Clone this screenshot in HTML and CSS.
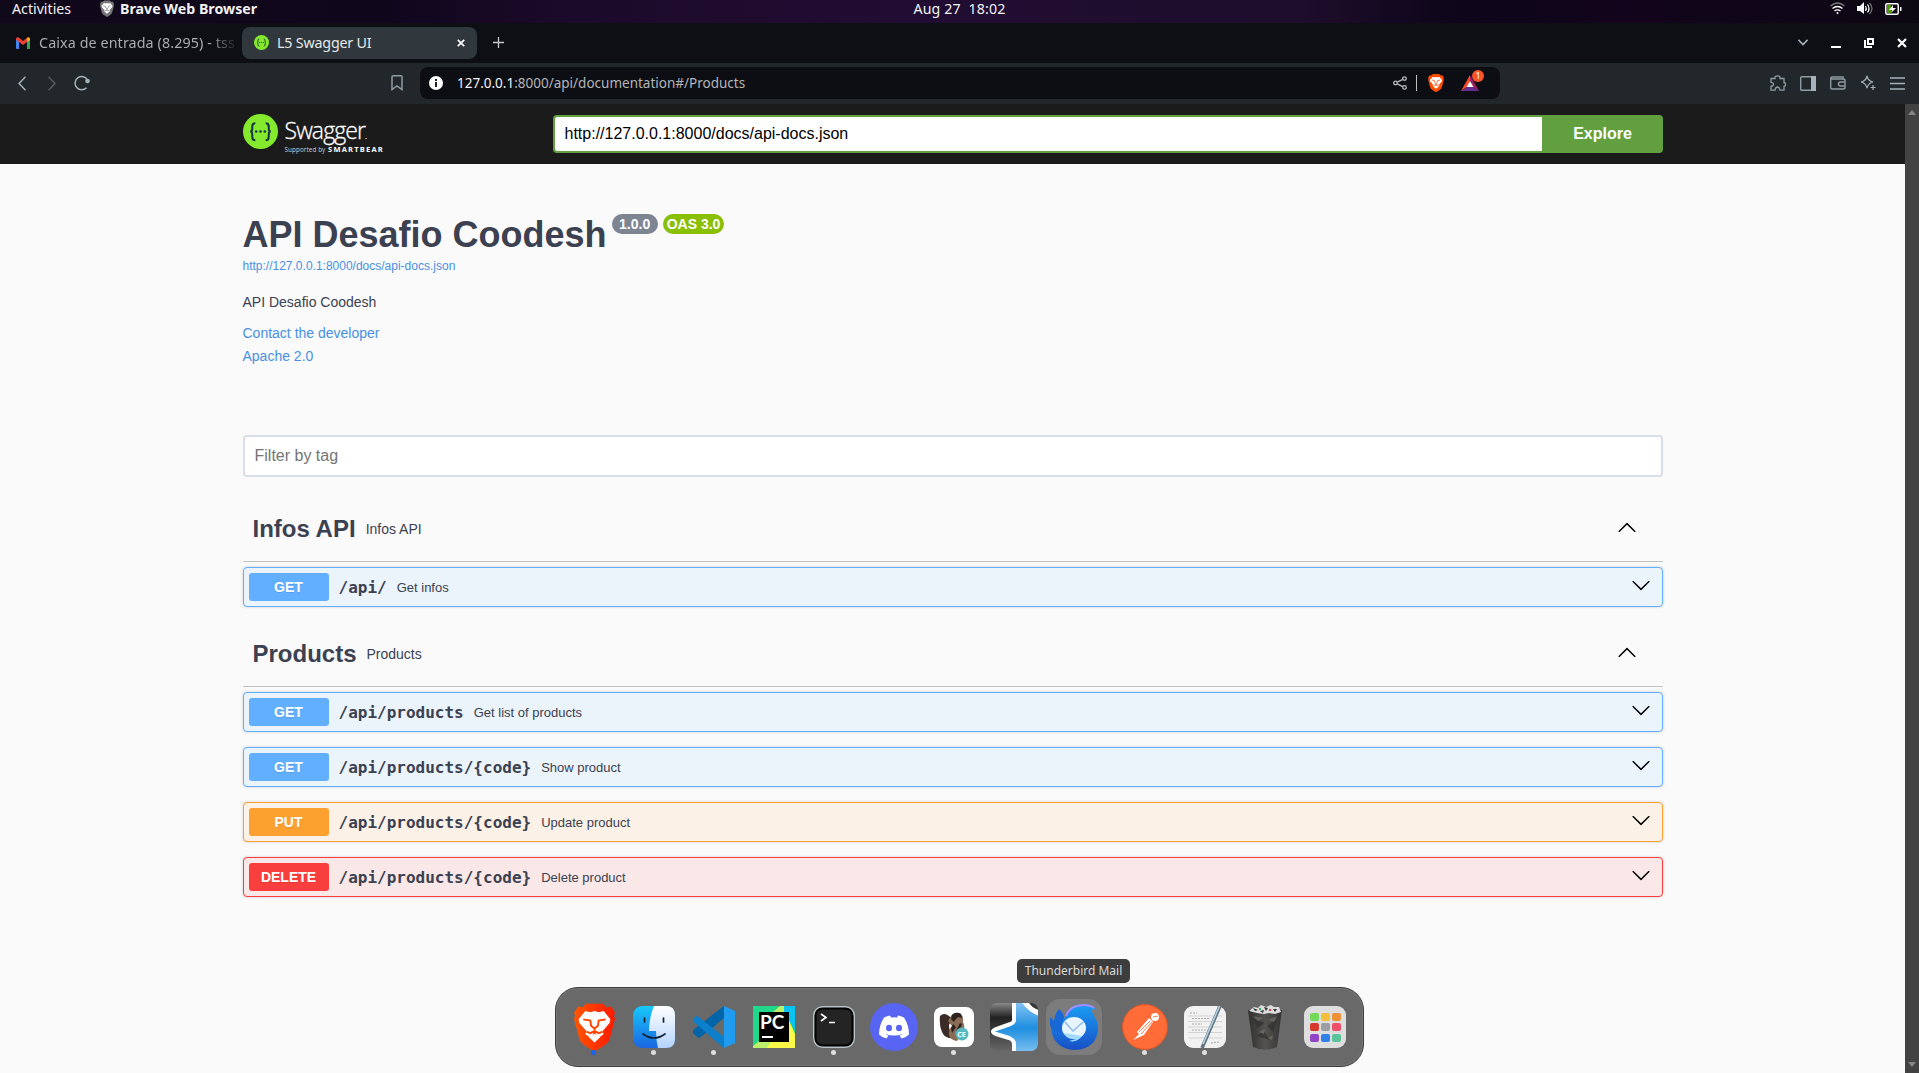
FILE: index.html
```html
<!DOCTYPE html>
<html lang="en">
<head>
<meta charset="utf-8">
<title>L5 Swagger UI</title>
<link rel="stylesheet" href="styles.css">
</head>
<body>
<svg width="0" height="0" class="defs">
  <defs>
    <symbol id="lion" viewBox="0 0 40 46">
      <path d="M12 0h16l4 4 4-1 4 6-1 3 1 3-5 19q-1 4-5 6.500L20 47l-10-6.500Q6 38 5 34L0 15l1-3-1-3 4-6 4 1z"/>
      <path fill="#fff" d="M11 7.500l5 1 4-1 4 1 5-1 6.500 8-.8 3.500-6.700 8 .8 3-5.300 4L20 27l-3.500 7-5.300-4 .8-3-6.700-8-.8-3.500z"/>
      <path fill="#fff" d="M14.500 33L20 29.500l5.500 3.500L20 38z"/>
      <path fill="none" stroke="currentColor" stroke-width="1.800" d="M9 15.500l7 1.200.6 5L20 24.500l3.400-2.800.6-5 7-1.200M20 24.500V29M12 27.500l4 1.500 4-2.200 4 2.200 4-1.500"/>
    </symbol>
    <symbol id="chev-up" viewBox="0 0 20 20"><path d="M17.418 14.908c.272.281.701.281.973 0s.272-.736 0-1.017l-7.908-7.83a.697.697 0 0 0-.969 0L1.609 13.89c-.268.281-.268.736 0 1.017s.701.281.973 0L10 7.767z"/></symbol>
    <symbol id="chev-down" viewBox="0 0 20 20"><path d="M17.418 6.109c.272-.268.709-.268.979 0s.271.701 0 .969l-7.908 7.83a.697.697 0 0 1-.979 0l-7.908-7.83c-.271-.268-.271-.701 0-.969s.709-.268.979 0L10 13.25z"/></symbol>
    <symbol id="braces" viewBox="0 0 34 34">
      <circle cx="17" cy="17" r="17" fill="#85ea2d"/>
      <g fill="none" stroke="#173647" stroke-width="2"><path d="M12 9Q9 9 9 12V14Q9 17 7 17Q9 17 9 20V22Q9 25.500 12 25.500M22 9Q25 9 25 12V14Q25 17 27 17Q25 17 25 20V22Q25 25.500 22 25.500"/></g>
      <g fill="#173647"><circle cx="12.800" cy="17" r="1.300"/><circle cx="17" cy="17" r="1.300"/><circle cx="21.200" cy="17" r="1.300"/></g>
    </symbol>
  </defs>
</svg>

<header class="system-bar">
  <div class="system-left"><span>Activities</span><svg class="lion-grey" width="14" height="17"><use href="#lion"/></svg><b>Brave Web Browser</b></div>
  <div class="clock">Aug 27&nbsp; 18:02</div>
  <div class="system-right">
    <svg width="15" height="13" viewBox="0 0 15 13" fill="none" stroke="#fff" stroke-width="1.300"><path stroke="#777" d="M.5 4Q7.500-2 14.500 4"/><path d="M2.500 6.500Q7.500 2.500 12.500 6.500M4.500 9Q7.500 6.800 10.500 9"/><circle cx="7.500" cy="11" r="1" fill="#fff" stroke="none"/></svg>
    <svg width="16" height="13" viewBox="0 0 16 13" fill="none" stroke="#fff" stroke-width="1.200"><path fill="#fff" stroke="none" d="M0 4h3l4-4v12L3 9H0z"/><path d="M8.500 4q1.500 2.500 0 5M10.500 2.500q3 4 0 8"/><path stroke="#777" d="M12.500 1q5 5.500 0 11"/></svg>
    <svg width="17" height="12" viewBox="0 0 17 12"><rect x=".75" y=".75" width="12.500" height="10.500" rx="1.500" fill="none" stroke="#fff" stroke-width="1.500"/><path fill="#4e9a06" d="M2 2h4v8H2z"/><path fill="#fff" d="M8 2L4 7h3l-1 3 5-5H8z M15 4h1.500v4H15z"/></svg>
  </div>
</header>

<nav class="tab-bar">
  <div class="tab tab-idle">
    <svg width="14" height="12" viewBox="0 0 14 12"><path fill="#4285f4" d="M0 2l3 2.500V12H1q-1 0-1-1z"/><path fill="#34a853" d="M11 4.500L14 2v9q0 1-1 1h-2z"/><path fill="#ea4335" d="M0 1.500Q1-.5 3 .8L7 4l4-3.200L11 5 7 8 0 2.800z"/><path fill="#fbbc04" d="M11 .8Q13-.5 14 1.500V3l-3 2z"/></svg>
    <span class="tab-title">Caixa de entrada (8.295) - tss</span>
  </div>
  <div class="tab tab-active">
    <svg width="15" height="15"><use href="#braces"/></svg>
    <span>L5 Swagger UI</span>
    <svg class="tab-close" width="8" height="8" viewBox="0 0 8 8" stroke="#fff" stroke-width="1.700"><path d="M.8.8l6.400 6.400M7.200.8L.8 7.200"/></svg>
  </div>
  <svg class="tab-new" width="11" height="11" viewBox="0 0 11 11" stroke="#c3c7c9" stroke-width="1.300"><path d="M5.500 0v11M0 5.500h11"/></svg>
  <div class="window-controls">
    <svg width="10" height="7" viewBox="0 0 10 7" fill="none" stroke="#a4b3bb" stroke-width="1.600"><path d="M.5.8L5 5.500 9.500.8"/></svg>
    <svg width="10" height="10" viewBox="0 0 10 10"><path fill="#fff" d="M0 8h10v2H0z"/></svg>
    <svg width="10" height="10" viewBox="0 0 10 10" fill="none" stroke="#fff" stroke-width="2"><path d="M4 1h5v5H4zM1 2v7h7"/></svg>
    <svg width="10" height="10" viewBox="0 0 10 10" stroke="#fff" stroke-width="2.200"><path d="M1 1l8 8M9 1L1 9"/></svg>
  </div>
</nav>

<div class="toolbar">
  <div class="nav-buttons">
    <svg width="8" height="15" viewBox="0 0 8 15" fill="none" stroke="#a4b3bb" stroke-width="1.500"><path d="M7.500.7L1 7.500l6.500 6.800"/></svg>
    <svg width="8" height="15" viewBox="0 0 8 15" fill="none" stroke="#555d62" stroke-width="1.500"><path d="M.5.7L7 7.500.5 14.300"/></svg>
    <svg width="16" height="16" viewBox="0 0 16 16"><path fill="none" stroke="#a4b3bb" stroke-width="1.500" d="M12.500 12.700A6.600 6.600 0 1 1 13.500 5"/><circle cx="13.500" cy="6" r="2.300" fill="#a4b3bb"/></svg>
  </div>
  <svg class="bookmark" width="12" height="16" viewBox="0 0 12 16" fill="none" stroke="#8d9ba3" stroke-width="1.500"><path d="M1 14.500V2q0-1.200 1.200-1.200h7.600Q11 .8 11 2v12.500L6 11z"/></svg>
  <div class="address">
    <svg width="14" height="14" viewBox="0 0 14 14"><circle cx="7" cy="7" r="7" fill="#fff"/><path fill="#222" d="M6 6h2v5H6zM6 3h2v2H6z"/></svg>
    <span class="url"><em>127.0.0.1</em>:8000/api/documentation#/Products</span>
    <svg class="share" width="14" height="14" viewBox="0 0 14 14" fill="none" stroke="#b6b8bb" stroke-width="1.300"><circle cx="2.500" cy="7" r="1.800"/><circle cx="11.500" cy="2.600" r="1.800"/><circle cx="11.500" cy="11.400" r="1.800"/><path d="M4.200 6.200l5.600-2.800M4.200 7.800l5.600 2.800"/></svg>
    <i class="address-rule"></i>
    <svg class="lion-orange" width="16" height="18"><use href="#lion"/></svg>
    <div class="rewards">
      <svg width="18" height="16" viewBox="0 0 18 16"><path fill="#ff4724" d="M9 0L0 16 6 12 9 6z"/><path fill="#9e1f63" d="M9 0l9 16-6-4-3-6z"/><path fill="#662d91" d="M0 16l6-4h6l6 4z"/><path fill="#fff" d="M9 6l3.500 6h-7z"/></svg>
      <span class="rewards-count">1</span>
    </div>
  </div>
  <div class="browser-actions">
    <svg width="16" height="16" viewBox="0 0 16 16" fill="none" stroke="#8d9ba3" stroke-width="1.300"><path d="M1 3.500h4Q4.500.8 7.500.8T10 3.500h4v4q1.500 0 1.500 2t-1.500 2v3.700h-4Q9.500 12 7.500 12T5 15.200H1v-4q2.500-.2 2.500-2T1 7.300z"/></svg>
    <svg width="16" height="15" viewBox="0 0 16 15"><rect x=".7" y=".7" width="14" height="13.600" rx="1" fill="none" stroke="#8d9ba3" stroke-width="1.400"/><path fill="#a4b3bb" d="M11 0h5v15h-5z"/></svg>
    <svg width="16" height="14" viewBox="0 0 16 14" fill="none" stroke="#8d9ba3" stroke-width="1.400"><path d="M13 3V1H2Q.7 1 .7 2.500v9Q.7 13 2 13h11q2 0 2-1.500v-7Q15 3 13 3H1M15 6h-4.500q-2 0-2 2t2 2H15"/></svg>
    <svg width="16" height="16" viewBox="0 0 16 16" fill="none" stroke="#a4b3bb" stroke-width="1.200"><path d="M7 .8Q8 6 13 7 8 8 7 13.200 6 8 1 7 6 6 7 .8zM13 10v5M10.500 12.500h5"/></svg>
    <svg width="15" height="13" viewBox="0 0 15 13" stroke="#a4b3bb" stroke-width="1.300"><path d="M0 1h15M0 6.500h15M0 12h15"/></svg>
  </div>
</div>

<div class="viewport">
<main class="page">
  <div class="topbar">
    <div class="wrapper topbar-row">
      <div class="logo">
        <svg width="35" height="35"><use href="#braces"/></svg>
        <div class="logo-words"><span class="logo-name">Swagger<small>.</small></span><span class="logo-sub">Supported by <b>SMARTBEAR</b></span></div>
      </div>
      <form class="spec-form"><input type="text" value="http://127.0.0.1:8000/docs/api-docs.json"><button type="button">Explore</button></form>
    </div>
  </div>

  <div class="wrapper">
    <section class="info">
      <h1>API Desafio Coodesh<span class="badges"><span class="badge">1.0.0</span><span class="badge badge-oas">OAS 3.0</span></span></h1>
      <a class="spec-link">http://127.0.0.1:8000/docs/api-docs.json</a>
      <p>API Desafio Coodesh</p>
      <a>Contact the developer</a>
      <a>Apache 2.0</a>
    </section>
    <input class="filter" type="text" placeholder="Filter by tag">

    <div class="tags">
    <section class="tag">
      <h3>Infos API<small>Infos API</small><svg width="20" height="20"><use href="#chev-up"/></svg></h3>
      <div class="op op-get"><span class="method">GET</span><code>/api/</code><span class="summary">Get infos</span><svg width="20" height="20"><use href="#chev-down"/></svg></div>
    </section>
    <section class="tag">
      <h3>Products<small>Products</small><svg width="20" height="20"><use href="#chev-up"/></svg></h3>
      <div class="op op-get"><span class="method">GET</span><code>/api/products</code><span class="summary">Get list of products</span><svg width="20" height="20"><use href="#chev-down"/></svg></div>
      <div class="op op-get"><span class="method">GET</span><code>/api/products/{code}</code><span class="summary">Show product</span><svg width="20" height="20"><use href="#chev-down"/></svg></div>
      <div class="op op-put"><span class="method">PUT</span><code>/api/products/{code}</code><span class="summary">Update product</span><svg width="20" height="20"><use href="#chev-down"/></svg></div>
      <div class="op op-delete"><span class="method">DELETE</span><code>/api/products/{code}</code><span class="summary">Delete product</span><svg width="20" height="20"><use href="#chev-down"/></svg></div>
    </section>
    </div>
  </div>
</main>
<div class="scrollbar"><svg width="8" height="5" viewBox="0 0 8 5"><path fill="#868686" d="M4 0l4 5H0z"/></svg><svg width="8" height="5" viewBox="0 0 8 5"><path fill="#868686" d="M0 0h8L4 5z"/></svg></div>
</div>

<div class="dock">
  <div class="app running focused"><svg class="lion-app" width="41" height="48" viewBox="0 0 40 46"><defs><linearGradient id="lg"><stop offset="0" stop-color="#ff5601"/><stop offset=".6" stop-color="#ff3000"/><stop offset="1" stop-color="#ff1b00"/></linearGradient></defs><use href="#lion" fill="url(#lg)"/></svg></div>
  <div class="app running"><svg width="42" height="42" viewBox="0 0 42 42"><defs><linearGradient id="fb" x2="0" y2="1"><stop stop-color="#17c8fb"/><stop offset="1" stop-color="#1a66e0"/></linearGradient><linearGradient id="fw" x2="0" y2="1"><stop stop-color="#fff"/><stop offset="1" stop-color="#b4d3ff"/></linearGradient></defs><rect width="42" height="42" rx="9" fill="url(#fb)"/><path fill="url(#fw)" d="M21 0h12q9 0 9 9v24q0 9-9 9h-8q-2-8-2-17h-7Q16 12 21 0z"/><path d="M11.500 12v4M30.500 12v4M10 28q11 8 22 0" fill="none" stroke="#123" stroke-width="1.700" stroke-linecap="round"/></svg></div>
  <div class="app running"><svg width="42" height="42" viewBox="0 0 42 42"><path fill="#0065a9" d="M31 0v12L6 32 0 27v-3z"/><path fill="#007acc" d="M0 13l4-3L31 31v11L0 15z"/><path fill="#0065a9" d="M6 32L0 27l16-13 8 4z"/><path fill="#0d80cc" d="M0 13l4-3L31 31v11L0 15z"/><path fill="#1f9cf0" d="M31 0l11 5v32l-11 5z"/></svg></div>
  <div class="app"><svg width="42" height="42" viewBox="0 0 42 42"><path fill="#21d789" d="M0 0h42v42H0z"/><path fill="#07c3f2" d="M31 0h11v24L30 6z"/><path fill="#fcf84a" d="M35 12l7 16v14H13l5-7h17z"/><path fill="#bdf06b" d="M27 0h4v6H20zM0 40l10-8 8 4-5 6H0z"/><path d="M6 6h30v30H6z"/><path fill="#fff" d="M9 30h11v2H9z"/><text x="7" y="23" class="pc-text">PC</text></svg></div>
  <div class="app running"><svg width="42" height="42" viewBox="0 0 42 42"><rect x=".7" y=".7" width="40.600" height="40.600" rx="9" fill="#000" stroke="#b7c3c8" stroke-width="1.400"/><rect x="3.500" y="3.500" width="35" height="35" rx="6" fill="#242424"/><path d="M8 8l5 3.500L8 15M16 16.500h6" fill="none" stroke="#fff" stroke-width="1.600"/></svg></div>
  <div class="app"><svg width="48" height="48" viewBox="0 0 48 48"><circle cx="24" cy="24" r="24" fill="#5865f2"/><path fill="#fff" d="M14 14.500q3-1.500 6-2l1 2q3-.5 6 0l1-2q3 .5 6 2 5 8 5 17-3 3-7.500 4l-2-3q2-.5 3-1.500-8.500 3-17 0 1 1 3 1.500l-2 3q-4.500-1-7.500-4 0-9 5-17z"/><ellipse cx="19" cy="25" rx="3" ry="3.300" fill="#5865f2"/><ellipse cx="29" cy="25" rx="3" ry="3.300" fill="#5865f2"/></svg></div>
  <div class="app running"><svg width="40" height="40" viewBox="0 0 40 40"><rect width="40" height="40" rx="8" fill="#fff"/><path fill="#3a2b26" d="M6 9q4-4 9 0l3 3-3 6q0 6 4 13-8 1-11-6T6 9z"/><path fill="#8b6b55" d="M17 9q3-4 8-3 5 2 4 9 3 6-1 12l-5 7q-7-1-8-6-1-5 3-9l-4-5z"/><path fill="#2b211e" d="M18 8q4-4 9-1l1 4-4-1-3 3-2 4 3 3-4 6-1-5 3-6-3-3zM26 16l2 1-2 5-4 2z"/><circle cx="28" cy="27" r="6.500" fill="#56b9c2"/><text x="23.300" y="29.800" class="ce-text">CE</text></svg></div>
  <div class="app"><svg width="48" height="48" viewBox="0 0 48 48"><defs><clipPath id="an"><rect width="48" height="48" rx="7"/></clipPath><linearGradient id="ag" x2="0" y2="1"><stop stop-color="#8fc8f5"/><stop offset=".5" stop-color="#1e8ee0"/><stop offset="1" stop-color="#8cc8f2"/></linearGradient><linearGradient id="ak" x2="0" y2="1"><stop stop-color="#888"/><stop offset=".3" stop-color="#222"/><stop offset="1" stop-color="#666"/></linearGradient></defs><g clip-path="url(#an)"><path fill="url(#ak)" d="M0 0h48v48H0z"/><path fill="url(#ag)" stroke="#fff" stroke-width="4" d="M24-3v20q0 3-5 4.500L6 26q-6 2.500 0 5l13 4q5 2 5 6v12h30V12q-6-1-12-5-7-5-9-10z"/><path fill="#333" stroke="#fff" stroke-width="3" d="M36-3q3 9 14 12V-3z"/></g></svg></div>
  <div class="app hovered"><svg width="48" height="46" viewBox="0 0 48 46"><defs><linearGradient id="tb" x2="0" y2="1"><stop stop-color="#1aa0f5"/><stop offset="1" stop-color="#174fc6"/></linearGradient></defs><path fill="#1767d5" d="M9 5q7 6 5 16L9 34Q-2 26 0 13l4 4Q5 9 9 5z"/><path fill="url(#tb)" d="M15 13Q18 1 33 0q8 0 13 5l-5 1 3 6-1-1q5 6 5 13-1 21-23 22Q3 45 1 24l4 3q3 3 7 0-2-9 3-14z"/><path fill="none" stroke="#a58bfa" stroke-width="2" d="M16 12Q20 1 34 1q6 0 10 3"/><ellipse cx="24" cy="24" rx="12" ry="11" fill="#e8f5ff"/><path fill="none" stroke="#8dbcf0" stroke-width="1.500" d="M15 18l8 9 10-9"/><path fill="#9edbff" d="M14 29q4 6 12 6l-7 2q8 2 13-5z"/></svg>
    <span class="tooltip">Thunderbird Mail</span></div>
  <i class="dock-rule"></i>
  <div class="app running"><svg width="46" height="46" viewBox="0 0 46 46"><circle cx="23" cy="23" r="22.500" fill="#ff6c37" stroke="#e05522"/><circle cx="33" cy="13" r="4" fill="#fff"/><path fill="#fff" d="M27 14l4 4-9 13-11 5 6-6-2-2z"/><path stroke="#ff6c37" stroke-width=".9" fill="none" d="M31 13l5-1M28 17L17 28M30 18L19 30"/></svg></div>
  <div class="app running"><svg width="42" height="44" viewBox="0 0 42 44"><rect y="1" width="42" height="42" rx="9" fill="#f2f2f2"/><path d="M4 11h34M4 16.500h34M4 22h34M4 27.500h34M4 33h34" stroke="#d3d3d3"/><path d="M6 8h7M8 13.500h18M8 19h10M8 25h16M27 38l8-1" stroke="#aaa" stroke-dasharray="2 1"/><path d="M36 1L18 43" stroke="#61747f" stroke-width="3.500"/><path d="M35.500 1L19 39" stroke="#b4d2e4" stroke-width="1.600"/></svg></div>
  <div class="app"><svg width="36" height="46" viewBox="0 0 36 46"><defs><linearGradient id="tr"><stop offset="0" stop-color="#2f2f2f"/><stop offset=".5" stop-color="#55534f"/><stop offset="1" stop-color="#343434"/></linearGradient></defs><path fill="url(#tr)" d="M1 6h34l-5 37q-12 5-24 0z"/><g opacity=".5"><path fill="#282828" d="M7 15l11 4-8 5zM20 22l10-7-4 13zM9 32l8-5 6 9z"/><path fill="#827e75" d="M6 12l10 2-5 3zM21 16l9-4-3 6zM12 28l6-3-1 5zM21 34l5-3-1 5z"/></g><path fill="#dcdcdc" d="M2 7l5-4 4 1 3-3 5 2 5-2 3 2 5 0 2 5-6 2-6-1-5 1-7-1z"/><path fill="#343434" d="M6 4l5 2-3 1zM17 3l4 1-2 3zM26 5l4 0-2 3zM13 7l4-1-1 3z"/><path fill="#3ea76b" d="M12 4h2v2h-2z"/><path fill="#d14836" d="M22 5h2v2h-2z"/></svg></div>
  <div class="app"><div class="launcher"><i class="g1"></i><i class="g2"></i><i class="g3"></i><i class="g4"></i><i class="g5"></i><i class="g6"></i><i class="g7"></i><i class="g8"></i><i class="g9"></i></div></div>
</div>
</body>
</html>
```
FILE: styles.css
```css
* { box-sizing: border-box; }
body { margin: 0; height: 1073px; overflow: hidden; display: flex; flex-direction: column; background: #fafafa; color: #3b4151; font-family: "Liberation Sans", Arial, sans-serif; }
svg { display: block; flex: none; }
.defs { position: absolute; }

/* Desktop bar */
.system-bar { height: 23px; flex: none; display: grid; grid-template-columns: 1fr auto 1fr; align-items: center; padding: 0 17px 6px 12px; color: #f2f2f2; font: 14.200px/17px "Noto Sans", sans-serif; background: linear-gradient(90deg, #10091a 0, #10061c 20%, #1c0a2a 30%, #210d33 48%, #1e0d2b 68%, #0d0519 76%, #12041c 85%, #0c0812 100%); }
.system-left { display: flex; align-items: center; }
.lion-grey { fill: #777; color: #777; margin: 0 6px 0 29px; }
.clock { padding-left: 5px; letter-spacing: .15px; }
.system-right { display: flex; justify-content: flex-end; align-items: center; gap: 12px; }

/* Tabs */
.tab-bar { height: 40px; flex: none; display: flex; align-items: center; padding: 0 12px 1px 5px; background: #0d0f14; font: 14.300px/20px "Noto Sans", sans-serif; color: #a9abad; }
.tab { height: 32px; display: flex; align-items: center; border-radius: 8px; }
.tab-idle { width: 237px; padding: 0 6px 0 11px; gap: 9px; letter-spacing: .1px; }
.tab-title { white-space: nowrap; -webkit-mask-image: linear-gradient(90deg, #000 86%, rgba(0, 0, 0, .15)); mask-image: linear-gradient(90deg, #000 86%, rgba(0, 0, 0, .15)); }
.tab-active { width: 235px; padding: 0 12px; gap: 8px; background: #30383d; color: #e6e8e9; letter-spacing: -.2px; }
.tab-close { margin-left: auto; }
.tab-new { margin-left: 16px; }
.window-controls { margin-left: auto; display: flex; align-items: center; gap: 23px; }

/* Toolbar */
.toolbar { height: 41px; flex: none; display: flex; align-items: center; padding: 0 14px 1px 18px; background: #22272b; }
.nav-buttons { display: flex; align-items: center; gap: 22px; width: 373px; }
.nav-buttons svg:last-child { margin-left: -4px; }
.bookmark { margin-right: 17px; }
.address { width: 1080px; height: 32px; border-radius: 8px; background: #0d0e13; display: flex; align-items: center; padding: 0 21px 0 9px; }
.url { margin-left: 14px; font: 13.500px/20px "Noto Sans", sans-serif; color: #b3b5b9; }
.url em { font-style: normal; color: #f2f2f2; }
.share { margin-left: auto; }
.address-rule { width: 1px; height: 16px; margin: 0 11px 0 9px; background: #c0c0c0; }
.lion-orange { fill: #ff4a00; }
.lion-orange, .lion-app { color: #ff4500; }
.rewards { position: relative; margin-left: 17px; }
.rewards-count { position: absolute; left: 11px; top: -5px; width: 12px; height: 12px; border-radius: 6px; background: #fb542b; color: #fff; font: 9px/12px "Noto Sans", sans-serif; text-align: center; }
.browser-actions { margin-left: auto; display: flex; align-items: center; gap: 14px; }

/* Page */
.viewport { flex: 1; display: flex; min-height: 0; }
.page { flex: 1; min-width: 0; }
.scrollbar { width: 14px; background: #424242; display: flex; flex-direction: column; justify-content: space-between; align-items: center; padding: 6px 0; }
.wrapper { width: 1460px; margin: 0 auto; padding: 0 20px; }
.topbar { height: 60px; background: #1b1b1b; }
.topbar-row { height: 60px; display: flex; align-items: center; }
.logo { width: 310.500px; display: flex; gap: 7px; height: 41px; }
.logo-words { display: flex; flex-direction: column; color: #fff; padding-top: 3px; }
.logo-name { font: 300 23px/27px "Open Sans", sans-serif; letter-spacing: -.9px; height: 27px; -webkit-text-stroke: .3px #fff; }
.logo-name small { font-size: 8px; }
.logo-sub { font: 6.300px/10px "Open Sans", sans-serif; white-space: nowrap; color: #d0d0d0; letter-spacing: .1px; }
.logo-sub b { font-size: 7.500px; letter-spacing: 1.200px; margin-left: 1px; color: #fff; }
.spec-form { flex: 1; display: flex; height: 38px; }
.spec-form input { flex: 1; min-width: 0; border: 2px solid #62a03f; border-right: 0; border-radius: 4px 0 0 4px; padding: 0 9.500px; font: 16px "Liberation Sans", sans-serif; color: #000; background: #fff; outline: none; }
.spec-form button { width: 121px; border: 0; border-radius: 0 4px 4px 0; background: #62a03f; color: #fff; font: bold 16px "Liberation Sans", sans-serif; padding: 0 0 0 1px; }

.info { display: flex; flex-direction: column; align-items: flex-start; margin-top: 50px; height: 221px; font-size: 14px; }
.info h1 { margin: 0; display: flex; font-size: 36px; line-height: 41px; }
.info a { color: #4990e2; line-height: 16px; margin-bottom: 7px; }
.info .spec-link { font-size: 12px; line-height: 14px; margin: 4px 0 0; }
.info p { margin: 21px 0 15px; line-height: 16px; }
.badges { display: flex; gap: 5px; margin-left: 5px; }
.badge { height: 20px; padding: 0 7.500px; border-radius: 20px; background: #7d8492; color: #fff; font-size: 14px; line-height: 20px; }
.badge-oas { background: #89bf04; padding: 0 4px; }
.filter { display: block; width: 100%; height: 42px; padding: 0 10px; border: 2px solid #d8dde7; border-radius: 4px; background: #fff; font: 16px "Liberation Sans", sans-serif; outline: none; }
.filter::placeholder { color: #757575; opacity: 1; }

.tags { padding-top: 20px; }
.tag h3 { margin: 0 0 5px; height: 65px; display: flex; align-items: center; padding: 0 26px 0 10px; border-bottom: 1px solid rgba(59, 65, 81, .3); font-size: 24px; }
.tag small { font-size: 14px; font-weight: 400; margin-left: 10px; }
.tag h3 svg, .op svg { margin-left: auto; margin-bottom: 4px; fill: #000; }
.op { height: 40px; display: flex; align-items: center; margin-bottom: 15px; padding: 0 11px 0 5px; border: 1px solid; border-radius: 4px; box-shadow: 0 0 3px rgba(0, 0, 0, .19); }
.method { width: 80px; height: 28px; border-radius: 3px; color: #fff; font-size: 14px; font-weight: 700; line-height: 28px; text-align: center; text-shadow: 0 1px 0 rgba(0, 0, 0, .1); }
.op code { margin: 0 10px; font: bold 16px "DejaVu Sans Mono", monospace; }
.summary { font-size: 13px; }
.op-get { border-color: #61affe; background: #ebf3fb; }
.op-get .method { background: #61affe; }
.op-put { border-color: #fca130; background: #fbf1e6; }
.op-put .method { background: #fca130; }
.op-delete { border-color: #f93e3e; background: #fae7e7; }
.op-delete .method { background: #f93e3e; }

/* Dock floats over the page */
.dock { position: absolute; left: 555px; top: 987px; width: 809px; height: 80px; border: 1px solid #3d3d3d; border-radius: 23px; background: #696969; display: flex; align-items: center; padding: 0 8px; box-shadow: inset 0 0 0 1px #777; }
.app { position: relative; width: 60px; height: 60px; flex: none; display: grid; place-items: center; }
.running::after { content: ""; position: absolute; left: 27px; top: 53px; width: 5px; height: 5px; border-radius: 50%; background: #dedede; }
.focused::after { background: #1763f5; }
.hovered { width: 56px; height: 56px; margin: 0 2px; border-radius: 14px; background: #7c7c7c; }
.tooltip { position: absolute; left: -29px; top: -40px; width: 113px; height: 24px; border-radius: 5px; background: #3d3d3d; color: #d8d8d8; font: 12px/24px "Noto Sans", sans-serif; text-align: center; white-space: nowrap; }
.dock-rule { width: 1px; height: 48px; margin: -13px 4px 0 7px; background: #8d8d8d; }
.pc-text { fill: #fff; font: bold 19px Lato, sans-serif; }
.ce-text { fill: #fff; font: bold 7px "Noto Sans", sans-serif; }
.launcher { width: 42px; height: 42px; border-radius: 9px; background: #dedede; display: grid; grid-template-columns: repeat(3, 9px); grid-auto-rows: 8px; gap: 2.500px 2px; place-content: center; }
.launcher i { border-radius: 2px; }
.g1 { background: #74d957; } .g2 { background: #f5bf3c; } .g3 { background: #ee9035; }
.g4 { background: #d33a2c; } .g5 { background: #9b9fa2; } .g6 { background: #ee5169; }
.g7 { background: #9145c6; } .g8 { background: #2f80e6; } .g9 { background: #5cc49d; }
```
